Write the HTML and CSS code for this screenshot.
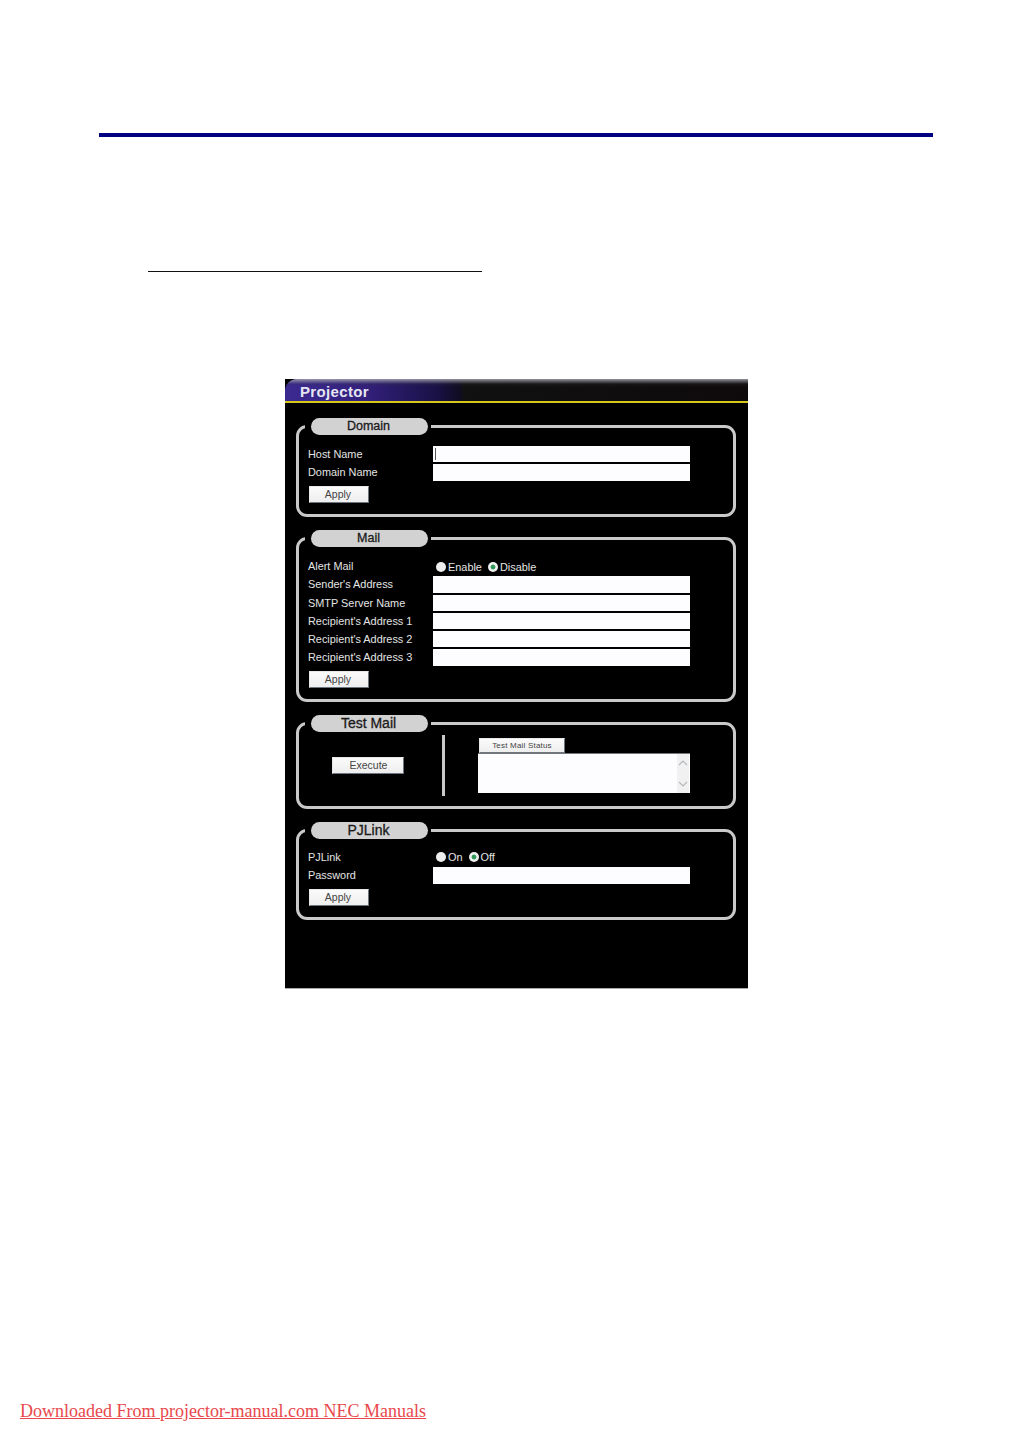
FILE: index.html
```html
<!DOCTYPE html>
<html lang="en">
<head>
    <meta charset="UTF-8">
    <meta name="viewport" content="width=device-width, initial-scale=1.0">
    <title>Projector Mail Settings</title>
    <link rel="stylesheet" href="styles.css">
</head>
<body>
    <div class="page-rule"></div>
    <div class="sub-rule"></div>

    <div class="panel">
        <div class="panel-header">Projector</div>

        <fieldset class="group">
            <legend><span class="pill">Domain</span></legend>
            <div class="rows">
                <label>Host Name</label>
                <input type="text" class="has-caret">
                <label>Domain Name</label>
                <input type="text">
            </div>
            <button class="btn btn-apply">Apply</button>
        </fieldset>

        <fieldset class="group">
            <legend><span class="pill">Mail</span></legend>
            <div class="rows">
                <label>Alert Mail</label>
                <div class="radios">
                    <input type="radio" name="alert"><span class="radio-text">Enable</span>
                    <input type="radio" name="alert" checked><span class="radio-text">Disable</span>
                </div>
                <label>Sender's Address</label>
                <input type="text">
                <label>SMTP Server Name</label>
                <input type="text">
                <label>Recipient's Address 1</label>
                <input type="text">
                <label>Recipient's Address 2</label>
                <input type="text">
                <label>Recipient's Address 3</label>
                <input type="text">
            </div>
            <button class="btn btn-apply">Apply</button>
        </fieldset>

        <fieldset class="group group-test">
            <legend><span class="pill pill-strong">Test Mail</span></legend>
            <div class="test-body">
                <div class="test-left">
                    <button class="btn btn-execute">Execute</button>
                </div>
                <div class="test-divider"></div>
                <div class="test-right">
                    <button class="btn btn-status">Test Mail Status</button>
                    <div class="status-box">
                        <div class="scrollbar">
                            <svg width="12" height="12" viewBox="0 0 12 12"><path d="M2 8 L6 4 L10 8" fill="none" stroke="#b4b8bc" stroke-width="1.2"/></svg>
                            <svg width="12" height="12" viewBox="0 0 12 12"><path d="M2 4 L6 8 L10 4" fill="none" stroke="#b4b8bc" stroke-width="1.2"/></svg>
                        </div>
                    </div>
                </div>
            </div>
        </fieldset>

        <fieldset class="group group-pjlink">
            <legend><span class="pill pill-strong">PJLink</span></legend>
            <div class="rows">
                <label>PJLink</label>
                <div class="radios">
                    <input type="radio" name="pjlink"><span class="radio-text">On</span>
                    <input type="radio" name="pjlink" checked><span class="radio-text">Off</span>
                </div>
                <label>Password</label>
                <input type="text">
            </div>
            <button class="btn btn-apply">Apply</button>
        </fieldset>
    </div>

    <a class="footer-link" href="#">Downloaded From projector-manual.com NEC Manuals</a>
</body>
</html>
```

FILE: styles.css
```css
html, body {
    margin: 0;
    padding: 0;
}
body {
    display: flex;
    flex-direction: column;
    height: 1456px;
    overflow: hidden;
    background: #fff;
    font-family: "Liberation Sans", Arial, sans-serif;
    box-sizing: border-box;
    padding-top: 133px;
}
.page-rule {
    height: 4px;
    width: 834px;
    margin-left: 99px;
    background: #000080;
}
.sub-rule {
    height: 1px;
    width: 334px;
    margin: 134px 0 0 148px;
    background: #111;
}
.panel {
    width: 463px;
    height: 610px;
    margin: 107px 0 0 285px;
    background: #000;
    box-sizing: border-box;
    border-bottom: 1px solid #aaa;
}
.panel-header {
    height: 22px;
    line-height: 25px;
    padding-left: 15px;
    font-size: 15px;
    font-weight: bold;
    letter-spacing: 0.35px;
    color: #e6e6f2;
    border-bottom: 2px solid #d6c81a;
    border-top-left-radius: 12px;
    background:
        linear-gradient(to bottom, rgba(170,170,180,0.85), rgba(60,60,70,0.2) 5px, rgba(0,0,0,0) 8px),
        linear-gradient(to right, #3c2a92 0, #33207c 80px, #1a1248 150px, #100c20 176px, #111 178px, #0e0a0c 100%);
}
.group {
    margin: 15px 12px 13px 11px;
    padding: 11px 0 11px 9px;
    border: 3px solid #c9c9c9;
    border-radius: 11px;
    min-width: 0;
}
.group + .group {
    margin-top: 0;
}
.group legend {
    margin-left: -3px;
    padding: 0 3px 0 6px;
}
.pill {
    display: block;
    width: 117px;
    height: 17px;
    line-height: 16px;
    padding-right: 2px;
    box-sizing: border-box;
    border-radius: 9px;
    background: #d2d2d2;
    color: #1a1a1a;
    font-size: 12.5px;
    text-align: center;
    -webkit-text-stroke: 0.3px #1a1a1a;
}
.pill-strong {
    font-size: 14px;
}
.group-test {
    padding: 3px 0 10px 9px;
}
.group-pjlink {
    padding-top: 10px;
}
.group-pjlink .radios {
    padding-top: 0;
}
.rows {
    display: grid;
    grid-template-columns: 125px 257px;
    grid-auto-rows: 16.25px;
    row-gap: 2px;
    align-items: center;
}
.rows label {
    font-size: 10.9px;
    color: #e4e4e4;
}
.rows input[type="text"] {
    width: 100%;
    height: 100%;
    padding: 0;
    border: none;
    box-sizing: border-box;
    background: #fdfdff;
}
.rows input.has-caret {
    background: linear-gradient(#555, #555) 2px 2px / 1px 12px no-repeat, #fdfdff;
}
.radios {
    display: flex;
    align-items: center;
    padding: 1px 0 0 3px;
    font-size: 10.9px;
    color: #e4e4e4;
}
.radios input {
    appearance: none;
    width: 10px;
    height: 10px;
    margin: 0 2px 0 0;
    border-radius: 50%;
    background: #eee;
}
.radios input:checked {
    background: radial-gradient(circle, #2f9a5a 0, #2f9a5a 2px, #f0f0f0 2.8px);
}
.radio-text {
    margin-right: 6px;
}
.btn {
    display: block;
    padding: 0 2px 1px 0;
    border: 1px solid #e8e8e8;
    border-right-color: #6d7680;
    border-bottom-color: #6d7680;
    box-sizing: border-box;
    background: linear-gradient(to bottom, #fbfbfb, #eeeeee);
    color: #444;
    font-family: "Liberation Sans", Arial, sans-serif;
    font-size: 10.5px;
}
.btn-apply {
    width: 60px;
    height: 17px;
    margin: 5.5px 0 0 1px;
}
.test-body {
    display: flex;
    align-items: center;
    height: 61px;
}
.test-left {
    width: 134px;
    padding-left: 24px;
    box-sizing: border-box;
}
.btn-execute {
    width: 72px;
    height: 17px;
    padding: 0 0 1px 1px;
}
.test-divider {
    width: 3px;
    height: 61px;
    background: #c9c9c9;
}
.test-right {
    margin-left: 33px;
    align-self: flex-start;
    padding-top: 3px;
}
.btn-status {
    width: 86px;
    height: 15px;
    margin-left: 1px;
    padding: 0;
    font-size: 8px;
    letter-spacing: 0.2px;
}
.status-box {
    display: flex;
    justify-content: flex-end;
    width: 212px;
    height: 40px;
    background: #fdfdff;
    box-sizing: border-box;
    border-top: 1px solid #777;
    padding-right: 1px;
}
.scrollbar {
    display: flex;
    flex-direction: column;
    justify-content: space-between;
    width: 12px;
    padding: 3px 0;
    box-sizing: border-box;
    background: #f1f1f1;
}
.scrollbar svg {
    display: block;
}
.footer-link {
    margin: 412px 0 0 20px;
    width: max-content;
    font-family: "Liberation Serif", "Times New Roman", serif;
    font-size: 18px;
    color: #e8484c;
    text-decoration: underline;
}
```
